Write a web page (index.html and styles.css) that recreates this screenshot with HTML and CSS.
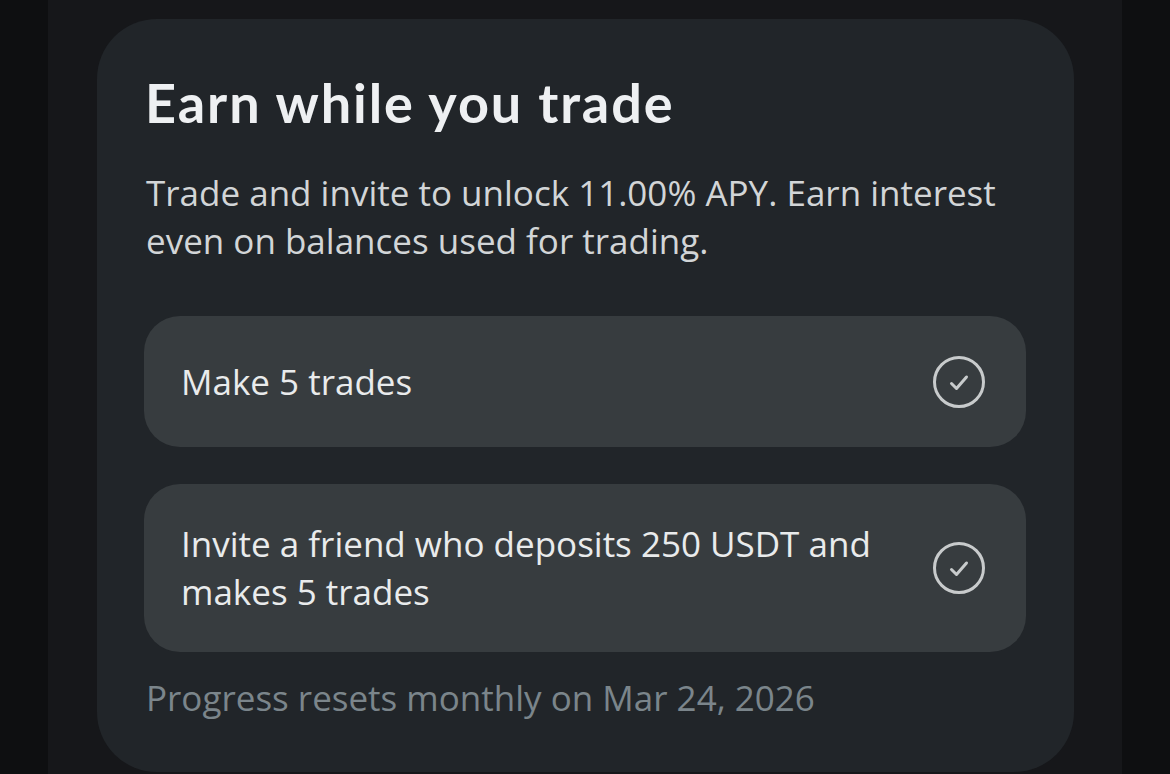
FILE: index.html
```html
<!DOCTYPE html>
<html lang="en">
<head>
  <meta charset="UTF-8">
  <title>Earn while you trade</title>
  <link rel="stylesheet" href="styles.css">
</head>
<body>

  <div class="page">
    <div class="column">
      <div class="card">
        <h1>Earn while you trade</h1>
        <p class="intro">Trade and invite to unlock 11.00% APY. Earn interest even on balances used for trading.</p>

        <div class="tasks">
          <div class="task task-short">
            <span class="task-text">Make 5 trades</span>
            <svg class="check" width="54" height="54" viewBox="0 0 54 54">
              <circle cx="27" cy="27" r="24.5" fill="none" stroke="#c8cbcc" stroke-width="3"/>
              <path d="M19.5 28.5 L24.5 33.5 L34.5 22" fill="none" stroke="#c8cbcc" stroke-width="3" stroke-linecap="round" stroke-linejoin="round"/>
            </svg>
          </div>

          <div class="task">
            <span class="task-text">Invite a friend who deposits 250 USDT and makes 5 trades</span>
            <svg class="check" width="54" height="54" viewBox="0 0 54 54">
              <circle cx="27" cy="27" r="24.5" fill="none" stroke="#c8cbcc" stroke-width="3"/>
              <path d="M19.5 28.5 L24.5 33.5 L34.5 22" fill="none" stroke="#c8cbcc" stroke-width="3" stroke-linecap="round" stroke-linejoin="round"/>
            </svg>
          </div>
        </div>

        <p class="note">Progress resets monthly on Mar 24, 2026</p>
      </div>
    </div>
  </div>

</body>
</html>
```

FILE: styles.css
```css
body {
  margin: 0;
  padding: 0;
  background: #0e0f11;
  font-family: "Open Sans", Arial, sans-serif;
  overflow: hidden;
}

.page {
  display: flex;
  justify-content: center;
  height: 774px;
}

.column {
  width: 1074px;
  background: #16171a;
  padding: 19px 48px 0 49px;
  box-sizing: border-box;
}

.card {
  background: #212529;
  border-radius: 60px;
  padding: 49px 48px 40px 47px;
  min-height: 753px;
  box-sizing: border-box;
}

h1 {
  margin: 0 0 0 1px;
  font-family: Lato, Arial, sans-serif;
  font-weight: 700;
  font-size: 54px;
  line-height: 70px;
  letter-spacing: 1.9px;
  color: #eef0f2;
}

.intro {
  margin: 31px 0 51px 2px;
  font-size: 35px;
  line-height: 48px;
  color: #d2d5d7;
}

.tasks {
  display: flex;
  flex-direction: column;
  gap: 37px;
}

.task {
  display: flex;
  align-items: center;
  justify-content: space-between;
  gap: 24px;
  background: #373c3f;
  border-radius: 36px;
  padding: 36px 40px 36px 37px;
}

.task-short {
  min-height: 59px;
}

.task-text {
  font-size: 35px;
  line-height: 48px;
  color: #e9ebec;
}

.check {
  flex-shrink: 0;
}

.note {
  margin: 22px 0 0 2px;
  font-size: 35px;
  line-height: 48px;
  color: #7b858b;
}
```
